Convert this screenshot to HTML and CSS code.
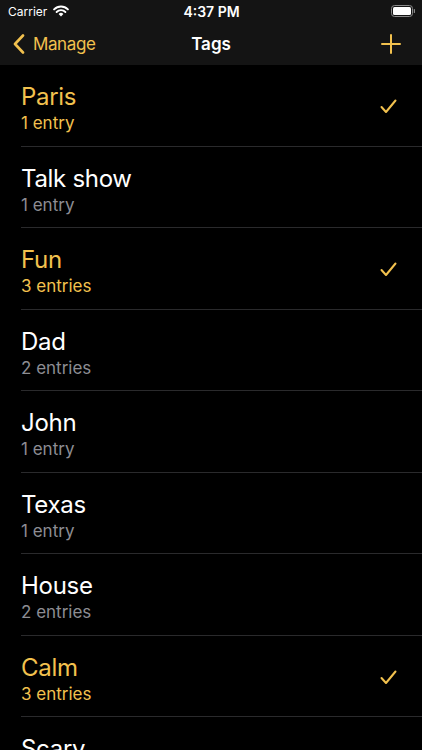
FILE: index.html
```html
<!DOCTYPE html>
<html lang="en">
<head>
  <meta charset="UTF-8">
  <meta name="viewport" content="width=device-width, initial-scale=1.0">
  <title>Tags</title>
  <link rel="stylesheet" href="styles.css">
</head>
<body>
  <header class="top">
    <div class="status-bar">
      <div class="carrier">
        Carrier
        <svg class="wifi" width="16" height="12" viewBox="0 0 16 12">
          <path d="M8 11.5 L5.6 9 A3.4 3.4 0 0 1 10.4 9 Z" fill="#fff"/>
          <path d="M3.6 7 A6.2 6.2 0 0 1 12.4 7" stroke="#fff" stroke-width="1.9" fill="none" stroke-linecap="round"/>
          <path d="M1.1 4.4 A9.8 9.8 0 0 1 14.9 4.4" stroke="#fff" stroke-width="1.9" fill="none" stroke-linecap="round"/>
        </svg>
      </div>
      <div class="time">4:37 PM</div>
      <div class="battery">
        <svg width="24" height="12" viewBox="0 0 24 12">
          <rect x="0.5" y="0.5" width="21" height="11" rx="3" fill="none" stroke="#8a8a8a"/>
          <rect x="2" y="2" width="18" height="8" rx="1.5" fill="#fff"/>
          <path d="M22.8 4 v4 a1.6 1.6 0 0 0 0 -4 z" fill="#8a8a8a"/>
        </svg>
      </div>
    </div>
    <nav class="nav-bar">
      <a class="back">
        <svg width="12" height="20" viewBox="0 0 12 20">
          <path d="M10 1.5 L2 10 L10 18.5" stroke="currentColor" stroke-width="2.6" fill="none" stroke-linecap="round" stroke-linejoin="round"/>
        </svg>
        Manage
      </a>
      <h1 class="title">Tags</h1>
      <a class="add">
        <svg width="20" height="20" viewBox="0 0 20 20">
          <path d="M10 1 V19 M1 10 H19" stroke="currentColor" stroke-width="2" stroke-linecap="round"/>
        </svg>
      </a>
    </nav>
  </header>

  <ul class="tag-list">
    <li class="tag selected">
      <div class="tag-text"><div class="tag-name">Paris</div><div class="tag-count">1 entry</div></div>
      <svg class="check" width="17" height="15" viewBox="0 0 17 15"><path d="M1.5 8 L6 13 L15.5 1.5" stroke="currentColor" stroke-width="2" fill="none" stroke-linecap="round" stroke-linejoin="round"/></svg>
    </li>
    <li class="tag">
      <div class="tag-text"><div class="tag-name">Talk show</div><div class="tag-count">1 entry</div></div>
    </li>
    <li class="tag selected">
      <div class="tag-text"><div class="tag-name">Fun</div><div class="tag-count">3 entries</div></div>
      <svg class="check" width="17" height="15" viewBox="0 0 17 15"><path d="M1.5 8 L6 13 L15.5 1.5" stroke="currentColor" stroke-width="2" fill="none" stroke-linecap="round" stroke-linejoin="round"/></svg>
    </li>
    <li class="tag">
      <div class="tag-text"><div class="tag-name">Dad</div><div class="tag-count">2 entries</div></div>
    </li>
    <li class="tag">
      <div class="tag-text"><div class="tag-name">John</div><div class="tag-count">1 entry</div></div>
    </li>
    <li class="tag">
      <div class="tag-text"><div class="tag-name">Texas</div><div class="tag-count">1 entry</div></div>
    </li>
    <li class="tag">
      <div class="tag-text"><div class="tag-name">House</div><div class="tag-count">2 entries</div></div>
    </li>
    <li class="tag selected">
      <div class="tag-text"><div class="tag-name">Calm</div><div class="tag-count">3 entries</div></div>
      <svg class="check" width="17" height="15" viewBox="0 0 17 15"><path d="M1.5 8 L6 13 L15.5 1.5" stroke="currentColor" stroke-width="2" fill="none" stroke-linecap="round" stroke-linejoin="round"/></svg>
    </li>
    <li class="tag">
      <div class="tag-text"><div class="tag-name">Scary</div><div class="tag-count">1 entry</div></div>
    </li>
  </ul>
</body>
</html>
```

FILE: styles.css
```css
body {
  margin: 0;
  padding: 0;
  background-color: #000;
  color: #fff;
  font-family: Inter, "Liberation Sans", sans-serif;
  height: 750px;
  overflow: hidden;
}

.top {
  background-color: #141414; /* dark bar behind status + nav */
}

.status-bar {
  height: 22px;
  display: flex;
  align-items: center;
  justify-content: space-between;
  padding: 0 7px 0 8px;
  font-size: 12px;
}

.carrier {
  display: flex;
  align-items: center;
  gap: 6px;
  flex: 1;
}

.time {
  font-weight: 600;
  font-size: 14px;
}

.battery {
  flex: 1;
  display: flex;
  justify-content: flex-end;
}

.nav-bar {
  height: 43px;
  display: flex;
  align-items: center;
  justify-content: space-between;
  padding: 0 21px 0 13px;
  position: relative;
}

.back,
.add {
  color: #f2c14e;
  display: flex;
  align-items: center;
}

.back {
  gap: 8px;
  font-size: 17px;
  letter-spacing: -0.4px;
}

.title {
  position: absolute;
  left: 0;
  right: 0;
  text-align: center;
  margin: 0;
  font-size: 17px;
  font-weight: 600;
  pointer-events: none;
}

.tag-list {
  list-style: none;
  margin: 0;
  padding: 0 0 0 21px;
}

.tag {
  height: 81.5px;
  box-sizing: border-box;
  display: flex;
  align-items: center;
  justify-content: space-between;
  padding: 8px 25px 0 0;
  border-bottom: 1px solid #2a2a2c;
}

.tag-name {
  font-size: 24px;
  line-height: 28px;
  letter-spacing: -0.3px;
}

.tag-count {
  font-size: 17px;
  line-height: 24px;
  color: #8d8d93;
}

.check {
  margin-top: -5px;
}

.tag.selected .tag-name,
.tag.selected .tag-count,
.check {
  color: #f2c14e;
}
```
